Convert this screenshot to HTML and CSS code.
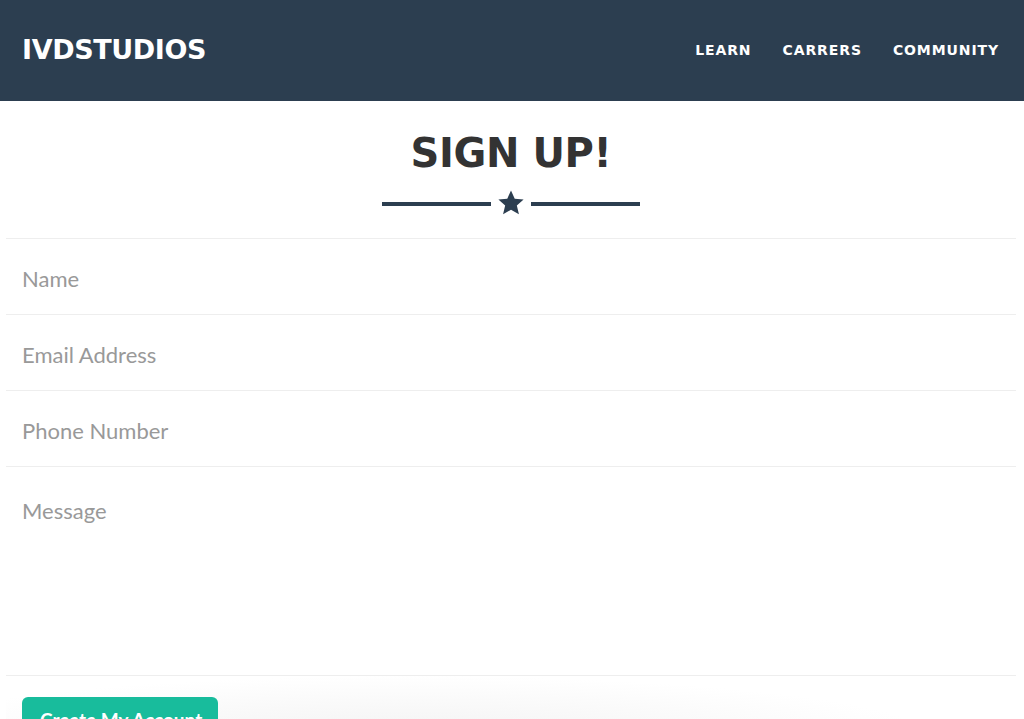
FILE: index.html
```html
<!DOCTYPE html>
<html lang="en">
<head>
<meta charset="utf-8">
<title>IVDSTUDIOS - Sign Up</title>
<link rel="stylesheet" href="styles.css">
</head>
<body>
<header class="navbar">
  <a class="brand" href="#">IVDSTUDIOS</a>
  <nav class="nav">
    <a href="#">Learn</a>
    <a href="#">Carrers</a>
    <a href="#">Community</a>
  </nav>
</header>
<main class="signup">
  <h2 class="title">Sign Up!</h2>
  <div class="divider">
    <span class="line"></span>
    <svg class="star" viewBox="0 0 24 24" width="28" height="28" aria-hidden="true">
      <path d="M12 1.2l3.2 7.1 7.6.7-5.8 5.1 1.8 7.6L12 17.8l-6.8 3.9 1.8-7.6-5.8-5.1 7.6-.7z" fill="#2c3e50"/>
    </svg>
    <span class="line"></span>
  </div>
  <form class="form">
    <div class="row"><input class="field" type="text" placeholder="Name"></div>
    <div class="row"><input class="field" type="email" placeholder="Email Address"></div>
    <div class="row"><input class="field" type="tel" placeholder="Phone Number"></div>
    <div class="row row-msg"><textarea class="field area" placeholder="Message"></textarea></div>
    <div class="actions"><button class="btn" type="button">Create My Account</button></div>
  </form>
</main>
</body>
</html>
```

FILE: styles.css
```css
* { box-sizing: border-box; }
html, body { margin: 0; padding: 0; }
body {
  background: #fff;
  font-family: Lato, "Open Sans", sans-serif;
  overflow: hidden;
  height: 719px;
}
.navbar {
  height: 101px;
  background: #2c3e50;
  display: flex;
  align-items: center;
  justify-content: space-between;
  padding: 0 25px 0 22px;
}
.brand {
  color: #fff;
  text-decoration: none;
  font-family: "DejaVu Sans", sans-serif;
  font-weight: 700;
  font-size: 27px;
  letter-spacing: -0.4px;
  margin-top: -2px;
}
.nav {
  display: flex;
  gap: 31px;
  margin-top: -2px;
}
.nav a {
  color: #fff;
  text-decoration: none;
  text-transform: uppercase;
  font-family: "DejaVu Sans", sans-serif;
  font-weight: 700;
  font-size: 14px;
  letter-spacing: 0.9px;
}
.signup {
  padding: 0 8px 0 6px;
  height: 618px;
}
.title {
  margin: 0;
  padding-top: 29px;
  text-align: center;
  font-family: "DejaVu Sans", sans-serif;
  font-weight: 700;
  font-size: 40px;
  line-height: 46px;
  letter-spacing: -0.4px;
  color: #333;
  text-transform: uppercase;
}
.divider {
  display: flex;
  justify-content: center;
  align-items: center;
  gap: 6px;
  margin-top: 13px;
  height: 30px;
}
.line {
  width: 109px;
  height: 4px;
  background: #2c3e50;
}
.star { display: block; margin-top: -2px; }
.form {
  margin-top: 19px;
  border-top: 1px solid #eee;
}
.row {
  border-bottom: 1px solid #eee;
  height: 76px;
  display: flex;
  align-items: center;
}
.row-msg { height: 209px; align-items: flex-start; }
.field {
  border: none;
  outline: none;
  background: transparent;
  width: 100%;
  font-family: Lato, sans-serif;
  font-size: 22px;
  color: #555;
  padding: 4px 16px 0;
}
.field::placeholder { color: #999; }
.area {
  resize: none;
  height: 200px;
  padding-top: 30px;
}
.actions {
  padding: 21px 16px 0;
  background: radial-gradient(ellipse 520px 60px at 40% 100%, #f3f3f3 0, #fafafa 60%, #fff 100%);
  height: 60px;
}
.btn {
  background: #18bc9c;
  border: none;
  border-radius: 6px;
  color: #fff;
  font-family: Lato, sans-serif;
  font-weight: 700;
  font-size: 19px;
  line-height: 24px;
  padding: 11px 18px;
  width: 196px;
  white-space: nowrap;
  cursor: pointer;
}
```
